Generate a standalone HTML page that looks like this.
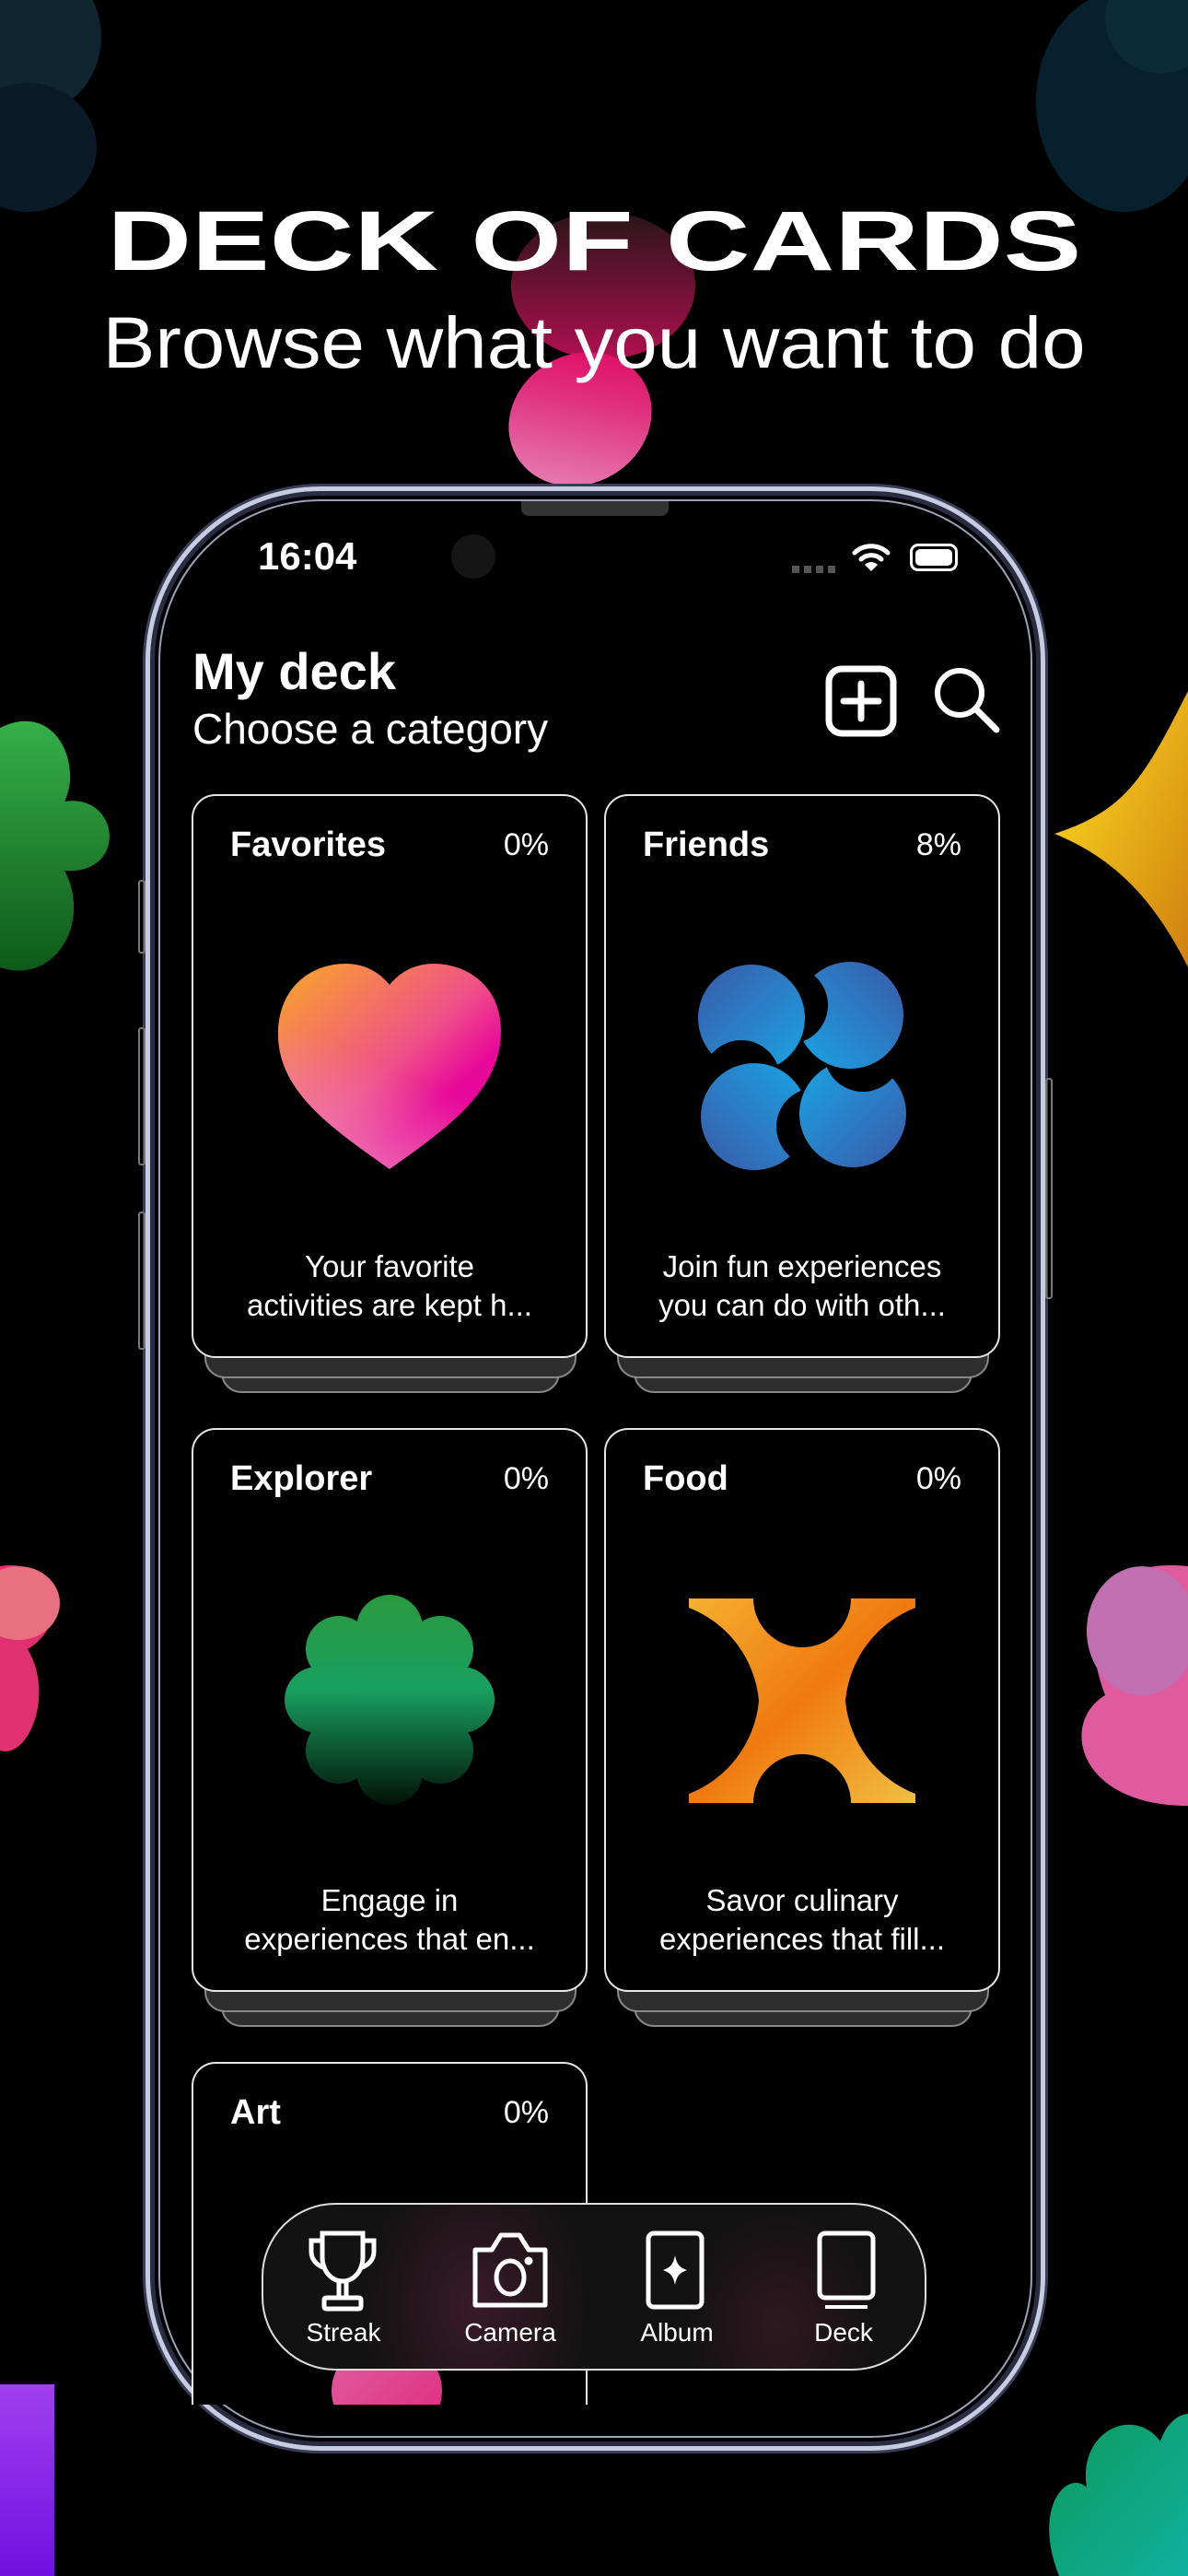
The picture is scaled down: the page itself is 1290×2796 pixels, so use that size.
<!DOCTYPE html>
<html><head><meta charset="utf-8">
<style>
*{margin:0;padding:0;box-sizing:border-box}
body{width:1290px;height:2796px;background:#000;position:relative;overflow:hidden;font-family:"Liberation Sans",sans-serif;color:#fff}
.a{position:absolute}
.card{position:absolute;border:2px solid #e6e6e6;border-radius:26px;background:#000}
.ct{position:absolute;left:40px;top:32px;font-size:38px;font-weight:bold}
.cp{position:absolute;right:40px;top:34px;font-size:34px}
.cd{position:absolute;left:0;right:0;bottom:34px;text-align:center;font-size:33px;line-height:42px}
.l1,.l2{position:absolute;border:2px solid #888;border-top:none;border-radius:0 0 22px 22px;background:#2e2e2e}
.tl{position:absolute;top:2516px;font-size:28px;width:160px;text-align:center}
</style></head><body>
<svg class="a" style="left:0;top:0" width="1290" height="2796">
<defs>
<linearGradient id="pk" x1="0" y1="1" x2="1" y2="0"><stop offset="0" stop-color="#e890c0"/><stop offset=".6" stop-color="#e0307f"/><stop offset="1" stop-color="#e0005a"/></linearGradient>
<linearGradient id="pkd" x1="0" y1="0" x2="0" y2="1"><stop offset="0" stop-color="#2a1418"/><stop offset="1" stop-color="#b01050"/></linearGradient>
<linearGradient id="gr" x1="0" y1="0" x2="0" y2="1"><stop offset="0" stop-color="#36b048"/><stop offset="1" stop-color="#0e5a1a"/></linearGradient>
<linearGradient id="yl" x1="0" y1="0" x2="1" y2="1"><stop offset="0" stop-color="#ffe020"/><stop offset="1" stop-color="#d08010"/></linearGradient>
<linearGradient id="tl" x1="0" y1="0" x2="1" y2="1"><stop offset="0" stop-color="#0c9a5a"/><stop offset="1" stop-color="#10b0a0"/></linearGradient>
<linearGradient id="pu" x1="0" y1="0" x2="0" y2="1"><stop offset="0" stop-color="#a040f0"/><stop offset="1" stop-color="#7010e0"/></linearGradient>
</defs>
<ellipse cx="30" cy="40" rx="80" ry="85" fill="#0f2530"/>
<ellipse cx="30" cy="160" rx="75" ry="70" fill="#0a1a28"/>
<ellipse cx="1220" cy="110" rx="95" ry="120" fill="#06202e"/>
<ellipse cx="1260" cy="20" rx="60" ry="60" fill="#0c2a38"/>
<ellipse cx="655" cy="310" rx="100" ry="80" fill="url(#pkd)"/>
<ellipse cx="630" cy="455" rx="80" ry="70" fill="url(#pk)" transform="rotate(-30 630 455)"/>
<path d="M0 790 C60 760 90 830 70 870 C130 860 140 950 70 945 C100 1000 60 1070 0 1050Z" fill="url(#gr)"/>
<path d="M1290 750 C1240 850 1220 880 1145 905 C1220 935 1260 990 1290 1050Z" fill="url(#yl)"/>
<path d="M0 1700 C60 1690 80 1760 30 1790 C60 1840 30 1910 0 1900Z" fill="#e03070"/>
<ellipse cx="20" cy="1740" rx="45" ry="40" fill="#e8707f"/>
<path d="M1290 1700 C1190 1690 1170 1760 1200 1840 C1150 1870 1170 1960 1290 1960Z" fill="#e05aa0"/>
<ellipse cx="1240" cy="1770" rx="60" ry="70" fill="#c06fb0"/>
<path d="M1150 2796 C1120 2720 1160 2680 1180 2700 C1170 2640 1230 2610 1260 2650 C1270 2620 1290 2620 1290 2620 L1290 2796Z" fill="url(#tl)"/>
<rect x="0" y="2588" width="59" height="208" fill="url(#pu)"/>
</svg>
<div class="a" style="left:0;width:1290px;top:212px;text-align:center;font-size:92px;font-weight:bold;line-height:100px"><span style="display:inline-block;transform:scaleX(1.38)">DECK OF CARDS</span></div>
<div class="a" style="left:0;width:1290px;top:322px;text-align:center;font-size:79px;line-height:100px"><span style="display:inline-block;transform:scaleX(1.08)">Browse what you want to do</span></div>
<div class="a" style="left:158px;top:528px;width:977px;height:2132px;border-radius:190px;border:5px solid #c8cce0;box-shadow:0 0 0 3px #3a3d58, inset 0 0 0 5px #2a2c44;background:#000"></div>
<div class="a" style="left:172px;top:542px;width:949px;height:2104px;border-radius:176px;border:2px solid #9aa0b8"></div>
<div class="a" style="left:150px;top:955px;width:8px;height:80px;border:2px solid #777;border-radius:3px"></div>
<div class="a" style="left:150px;top:1115px;width:8px;height:150px;border:2px solid #777;border-radius:3px"></div>
<div class="a" style="left:150px;top:1315px;width:8px;height:150px;border:2px solid #777;border-radius:3px"></div>
<div class="a" style="left:1135px;top:1170px;width:8px;height:240px;border:2px solid #777;border-radius:3px"></div>
<div class="a" style="left:566px;top:544px;width:160px;height:16px;background:#333;border-radius:0 0 8px 8px"></div>
<div class="a" style="left:490px;top:580px;width:48px;height:48px;border-radius:50%;background:#151515"></div>
<div class="a" style="left:280px;top:580px;font-size:42px;font-weight:bold">16:04</div>
<div class="a" style="left:860px;top:614px;width:48px;height:8px;background:repeating-linear-gradient(90deg,#555 0 8px,transparent 8px 13px)"></div>
<svg class="a" style="left:924px;top:588px" width="44" height="36" viewBox="0 0 44 36"><path d="M4 12 A26 26 0 0 1 40 12" stroke="#fff" stroke-width="5" fill="none" stroke-linecap="round"/><path d="M11 19 A16 16 0 0 1 33 19" stroke="#fff" stroke-width="5" fill="none" stroke-linecap="round"/><path d="M22 32 L15 25 A10 10 0 0 1 29 25Z" fill="#fff"/></svg>
<div class="a" style="left:988px;top:590px;width:52px;height:30px;border:3px solid #fff;border-radius:9px;padding:3px"><div style="width:100%;height:100%;background:#fff;border-radius:5px"></div></div>
<div class="a" style="left:209px;top:696px;font-size:56px;font-weight:bold">My deck</div>
<div class="a" style="left:209px;top:764px;font-size:46px">Choose a category</div>
<svg class="a" style="left:896px;top:722px" width="78" height="78" viewBox="0 0 78 78"><rect x="4" y="4" width="70" height="70" rx="14" stroke="#fff" stroke-width="7" fill="none"/><path d="M39 20V58M20 39H58" stroke="#fff" stroke-width="7" stroke-linecap="round"/></svg>
<svg class="a" style="left:1010px;top:720px" width="78" height="78" viewBox="0 0 78 78"><circle cx="32" cy="32" r="24" stroke="#fff" stroke-width="6" fill="none"/><path d="M50 50L72 72" stroke="#fff" stroke-width="7" stroke-linecap="round"/></svg>
<div class="l2" style="left:240px;top:1480px;width:368px;height:32px"></div><div class="l1" style="left:222px;top:1470px;width:404px;height:26px"></div>
<div class="l2" style="left:688px;top:1480px;width:368px;height:32px"></div><div class="l1" style="left:670px;top:1470px;width:404px;height:26px"></div>
<div class="l2" style="left:240px;top:2168px;width:368px;height:32px"></div><div class="l1" style="left:222px;top:2158px;width:404px;height:26px"></div>
<div class="l2" style="left:688px;top:2168px;width:368px;height:32px"></div><div class="l1" style="left:670px;top:2158px;width:404px;height:26px"></div>
<div class="card" style="left:208px;top:862px;width:430px;height:612px"><div class="ct">Favorites</div><div class="cp">0%</div>
<svg class="a" style="left:90px;top:180px" width="246" height="230" viewBox="0 0 246 230"><defs><linearGradient id="h" x1="0" y1="0" x2="1" y2="1"><stop offset="0" stop-color="#f9a825"/><stop offset=".5" stop-color="#f0508a"/><stop offset=".7" stop-color="#e8089a"/></linearGradient><linearGradient id="h2" x1="0" y1="1" x2="0.3" y2="0.4"><stop offset="0" stop-color="#f088b8"/><stop offset="1" stop-color="#f088b8" stop-opacity="0"/></linearGradient></defs><path d="M123 225 C60 180 0 140 2 75 C4 25 40 2 75 2 C100 2 115 15 123 25 C131 15 146 2 171 2 C206 2 244 25 244 75 C244 140 186 180 123 225Z" fill="url(#h)"/><path d="M123 225 C60 180 0 140 2 75 C4 25 40 2 75 2 C100 2 115 15 123 25 C131 15 146 2 171 2 C206 2 244 25 244 75 C244 140 186 180 123 225Z" fill="url(#h2)"/></svg>
<div class="cd">Your favorite<br>activities are kept h...</div></div>
<div class="card" style="left:656px;top:862px;width:430px;height:612px"><div class="ct">Friends</div><div class="cp">8%</div>
<svg class="a" style="left:96px;top:176px" width="234" height="234" viewBox="-117 -117 234 234"><defs>
<linearGradient id="b" gradientUnits="userSpaceOnUse" x1="-110" y1="-110" x2="10" y2="10"><stop offset="0" stop-color="#3a5aa8"/><stop offset="1" stop-color="#18a8e8"/></linearGradient>
<mask id="bm" maskUnits="userSpaceOnUse" x="-117" y="-117" width="234" height="234"><rect x="-117" y="-117" width="234" height="234" fill="#fff"/><circle cx="-66" cy="14" r="42" fill="#000"/></mask></defs>
<g><circle cx="-55" cy="-52" r="58" fill="url(#b)" mask="url(#bm)"/></g>
<g transform="rotate(90)"><circle cx="-55" cy="-52" r="58" fill="url(#b)" mask="url(#bm)"/></g>
<g transform="rotate(180)"><circle cx="-55" cy="-52" r="58" fill="url(#b)" mask="url(#bm)"/></g>
<g transform="rotate(270)"><circle cx="-55" cy="-52" r="58" fill="url(#b)" mask="url(#bm)"/></g></svg>
<div class="cd">Join fun experiences<br>you can do with oth...</div></div>
<div class="card" style="left:208px;top:1550px;width:430px;height:612px"><div class="ct">Explorer</div><div class="cp">0%</div>
<svg class="a" style="left:96px;top:176px" width="234" height="234" viewBox="-117 -117 234 234"><defs><linearGradient id="g" gradientUnits="userSpaceOnUse" x1="0" y1="-115" x2="0" y2="115"><stop offset="0" stop-color="#2a9a40"/><stop offset=".45" stop-color="#18a060"/><stop offset="1" stop-color="#021006"/></linearGradient></defs><g fill="url(#g)"><circle r="70"/><circle cx="0" cy="-78" r="36"/><circle cx="55" cy="-55" r="36"/><circle cx="78" cy="0" r="36"/><circle cx="55" cy="55" r="36"/><circle cx="0" cy="78" r="36"/><circle cx="-55" cy="55" r="36"/><circle cx="-78" cy="0" r="36"/><circle cx="-55" cy="-55" r="36"/></g></svg>
<div class="cd">Engage in<br>experiences that en...</div></div>
<div class="card" style="left:656px;top:1550px;width:430px;height:612px"><div class="ct">Food</div><div class="cp">0%</div>
<svg class="a" style="left:90px;top:183px" width="246" height="222" viewBox="0 0 246 222"><defs><linearGradient id="o" x1="0" y1="0" x2="1" y2="1"><stop offset="0" stop-color="#f5b030"/><stop offset=".5" stop-color="#f07a10"/><stop offset="1" stop-color="#f0c040"/></linearGradient></defs><path d="M0 0 H70 A53 53 0 0 0 176 0 H246 L246 10 A120 120 0 0 0 170 111 A120 120 0 0 0 246 212 V222 H176 A53 53 0 0 0 70 222 H0 V212 A120 120 0 0 0 76 111 A120 120 0 0 0 0 10Z" fill="url(#o)"/></svg>
<div class="cd">Savor culinary<br>experiences that fill...</div></div>
<div class="card" style="left:208px;top:2238px;width:430px;height:372px;border-bottom:none;border-radius:26px 26px 0 0;overflow:hidden"><div class="ct">Art</div><div class="cp">0%</div>
<div class="a" style="left:150px;top:300px;width:120px;height:110px;border-radius:50%;background:linear-gradient(135deg,#e060a0,#e02880)"></div></div>
<div class="a" style="left:284px;top:2391px;width:722px;height:182px;border:2px solid #ddd;border-radius:80px;background:radial-gradient(ellipse 120px 160px at 230px 110px,#3a1a28,transparent),radial-gradient(ellipse 100px 120px at 560px 130px,#301820,transparent),#131212"></div>
<svg class="a" style="left:332px;top:2420px" width="80" height="90" viewBox="0 0 80 90" fill="none" stroke="#fff" stroke-width="5"><path d="M18 4H62V30C62 45 52 56 40 56C28 56 18 45 18 30Z"/><path d="M18 12H6V24C6 34 14 40 22 42"/><path d="M62 12H74V24C74 34 66 40 58 42"/><path d="M36 56V74H44V56"/><rect x="20" y="74" width="40" height="12" rx="2"/></svg>
<svg class="a" style="left:508px;top:2420px" width="92" height="88" viewBox="0 0 92 88" fill="none" stroke="#fff" stroke-width="5"><path d="M8 22H26L36 6H56L66 22H84V82H8Z" stroke-linejoin="round"/><ellipse cx="46" cy="52" rx="15" ry="18"/><circle cx="66" cy="34" r="2" fill="#fff"/></svg>
<svg class="a" style="left:700px;top:2420px" width="66" height="88" viewBox="0 0 66 88" fill="none" stroke="#fff" stroke-width="5"><rect x="4" y="4" width="58" height="80" rx="6"/><path d="M33 28 C35 38 38 41 46 44 C38 47 35 50 33 60 C31 50 28 47 20 44 C28 41 31 38 33 28Z" fill="#fff" stroke="none"/></svg>
<svg class="a" style="left:886px;top:2420px" width="66" height="90" viewBox="0 0 66 90" fill="none" stroke="#fff" stroke-width="5"><rect x="4" y="4" width="58" height="70" rx="6"/><path d="M10 84H56" stroke-width="4"/></svg>
<div class="tl" style="left:293px">Streak</div>
<div class="tl" style="left:474px">Camera</div>
<div class="tl" style="left:655px">Album</div>
<div class="tl" style="left:836px">Deck</div>
</body></html>
